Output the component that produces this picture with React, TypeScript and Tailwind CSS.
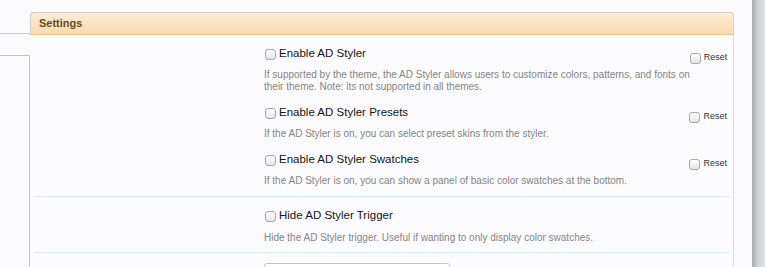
import React from "react";

function Box() {
  return (
    <span className="inline-block w-[11px] h-[11px] shrink-0 rounded-[3px] border border-[#a9a9a9] bg-gradient-to-b from-white to-[#e4e4e4]" />
  );
}

function Option({
  label,
  desc,
  first,
}: {
  label: string;
  desc: React.ReactNode;
  first?: boolean;
}) {
  return (
    <div className={`flex ${first ? "" : "mt-[12px]"}`}>
      <div className="flex-1 pl-[234px]">
        <label className="flex items-center h-[16px] text-[11.5px] text-[#151515]">
          <span className="ml-[1px] mr-[3px] flex">
            <Box />
          </span>
          {label}
        </label>
        <p className="mt-[7px] text-[10px] leading-[12px] text-[#858585] whitespace-nowrap">{desc}</p>
      </div>
      <div className="mt-[6px] mr-[3px] flex items-center h-[12px] gap-[3px] text-[9px] text-[#333]">
        <Box />
        Reset
      </div>
    </div>
  );
}

export default function App() {
  return (
    <div className="w-[765px] h-[267px] overflow-hidden bg-[#fbfbfd] flex font-['Liberation_Sans',Arial,sans-serif]">
      <div className="flex-1 flex flex-col min-h-0">
        <div className="h-[12px] shrink-0 overflow-hidden pl-[10px]">
          <div className="-mt-[14px] leading-[15px] text-[11px] text-[#8a8a8a] whitespace-nowrap">
            (e.g. [url] [b] [i] [/b] [/i] [quote]) ⓘ
          </div>
        </div>
        <div className="flex flex-1 min-h-0 overflow-hidden">
          <div className="w-[30px] shrink-0 flex flex-col">
            <div className="h-[22px] shrink-0 border-b border-[#c6d8db]" />
            <div className="mt-[21px] flex-1 border-t border-r border-[#a5d1d5]" />
          </div>
          <div className="w-[704px] shrink-0 flex flex-col">
            <div className="h-[23px] shrink-0 rounded-t-[4px] border border-[#cfcfcf] border-b-[#efc486] bg-gradient-to-b from-[#fcecd5] to-[#f8dbae] pl-[8px] flex items-center">
              <h2 className="text-[11px] font-bold text-[#6b4a1b]">Settings</h2>
            </div>
            <div className="flex-1 border-r border-[#d3e3e6] bg-[#fcfcfe]">
              <div className="pt-[11px] pb-[9px] ml-[4px] mr-[3px] border-b border-[#d9ebee]">
                <div className="-ml-[4px]">
                  <Option
                    first
                    label="Enable AD Styler"
                    desc={
                      <>
                        If supported by the theme, the AD Styler allows users to customize colors, patterns, and fonts on
                        <br />
                        their theme. Note: its not supported in all themes.
                      </>
                    }
                  />
                  <Option
                    label="Enable AD Styler Presets"
                    desc="If the AD Styler is on, you can select preset skins from the styler."
                  />
                  <Option
                    label="Enable AD Styler Swatches"
                    desc="If the AD Styler is on, you can show a panel of basic color swatches at the bottom."
                  />
                </div>
              </div>
              <div className="pt-[11px] pb-[8px] ml-[4px] mr-[3px] border-b border-[#d9ebee]">
                <div className="pl-[230px]">
                  <label className="flex items-center h-[16px] text-[11.5px] text-[#151515]">
                    <span className="ml-[1px] mr-[3px] flex">
                      <Box />
                    </span>
                    Hide AD Styler Trigger
                  </label>
                  <p className="mt-[8px] text-[10px] leading-[12px] text-[#858585]">
                    Hide the AD Styler trigger. Useful if wanting to only display color swatches.
                  </p>
                </div>
              </div>
              <div className="pl-[234px] mt-[10px]">
                <div className="w-[186px] h-[20px] rounded-[3px] border border-[#c6c6c6] bg-white" />
              </div>
            </div>
          </div>
        </div>
      </div>
      <div className="w-[13px] shrink-0 bg-gradient-to-r from-[#a8acaf] via-[#d2d4d6] to-[#dfe0e1]" />
    </div>
  );
}
